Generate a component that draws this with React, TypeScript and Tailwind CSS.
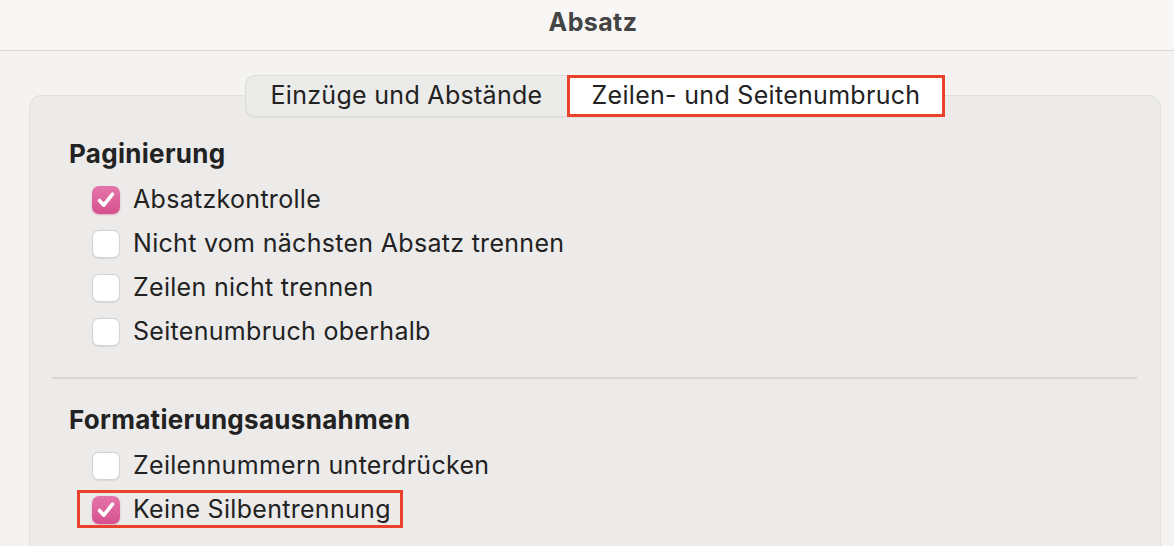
import React from "react";

type Row = { label: string; checked: boolean; marked?: boolean };

const pagination: Row[] = [
  { label: "Absatzkontrolle", checked: true },
  { label: "Nicht vom nächsten Absatz trennen", checked: false },
  { label: "Zeilen nicht trennen", checked: false },
  { label: "Seitenumbruch oberhalb", checked: false },
];

const exceptions: Row[] = [
  { label: "Zeilennummern unterdrücken", checked: false },
  { label: "Keine Silbentrennung", checked: true, marked: true },
];

function Checkbox({ checked }: { checked: boolean }) {
  if (checked) {
    return (
      <span className="flex h-[28px] w-[28px] shrink-0 items-center justify-center rounded-[7px] bg-gradient-to-b from-[#e475ab] to-[#d6508d] shadow-[0_1px_2px_rgba(180,40,100,0.3)]">
        <svg width="28" height="28" viewBox="0 0 28 28" fill="none">
          <path d="M7.5 14.5 L11.8 19.2 L20.5 8.2" stroke="white" strokeWidth="3.6" strokeLinecap="round" strokeLinejoin="round" />
        </svg>
      </span>
    );
  }
  return (
    <span className="h-[28px] w-[28px] shrink-0 rounded-[7px] border border-[#d4d3d1] bg-white shadow-[0_0.5px_1px_rgba(0,0,0,0.08)]" />
  );
}

function CheckRow({ row }: { row: Row }) {
  return (
    <div className="relative flex h-[44px] items-center gap-[13px] pl-[23px]">
      <Checkbox checked={row.checked} />
      <span className="text-[25px] tracking-[0.3px] text-[#222]">{row.label}</span>
      {row.marked ? (
        <span className="pointer-events-none absolute left-[8px] top-[2px] h-[38px] w-[326px] border-[3px] border-[#e8412c]" />
      ) : null}
    </div>
  );
}

export default function App() {
  return (
    <div
      className="h-[546px] w-[1174px] overflow-hidden bg-[#f4f3f1]"
      style={{ fontFamily: "Inter, 'Liberation Sans', sans-serif" }}
    >
      <div className="flex h-[51px] justify-center border-b border-[#d9d8d6] bg-[#f8f7f5] pl-[12px] pt-[4px]">
        <h1 className="text-[25px] font-bold tracking-[0.4px] text-[#444]">Absatz</h1>
      </div>

      <div className="pl-[29px] pr-[13px] pt-[24px]">
        <div className="relative z-10 flex justify-center">
          <div className="flex h-[42px] items-stretch rounded-[10px] border border-[#dcdbd9] bg-[#ebebea] shadow-[0_1px_1px_rgba(0,0,0,0.05)]">
            <button className="flex w-[321px] items-center justify-center text-[25px] tracking-[0.3px] text-[#222]">
              Einzüge und Abstände
            </button>
            <button className="-my-px -mr-px flex w-[378px] items-center justify-center border-[3px] border-[#e8412c] bg-white text-[25px] tracking-[0.3px] text-[#222]">
              Zeilen- und Seitenumbruch
            </button>
          </div>
        </div>

        <div className="-mt-[22px] h-[500px] rounded-[12px] border border-[#e1e0de] bg-[#ecebea] pl-[39px] pr-[23px] pt-[39px]">
          <h2 className="flex h-[36px] items-center text-[26px] font-bold tracking-[0.3px] text-[#222]">Paginierung</h2>
          <div className="mt-[7px]">
            {pagination.map((r) => (
              <CheckRow key={r.label} row={r} />
            ))}
          </div>

          <div className="-ml-[17px] mt-[23px] border-t-2 border-[#d7d6d4]" />

          <h2 className="mt-[22px] flex h-[36px] items-center text-[26px] font-bold tracking-[0.3px] text-[#222]">
            Formatierungsausnahmen
          </h2>
          <div className="mt-[7px]">
            {exceptions.map((r) => (
              <CheckRow key={r.label} row={r} />
            ))}
          </div>
        </div>
      </div>
    </div>
  );
}
